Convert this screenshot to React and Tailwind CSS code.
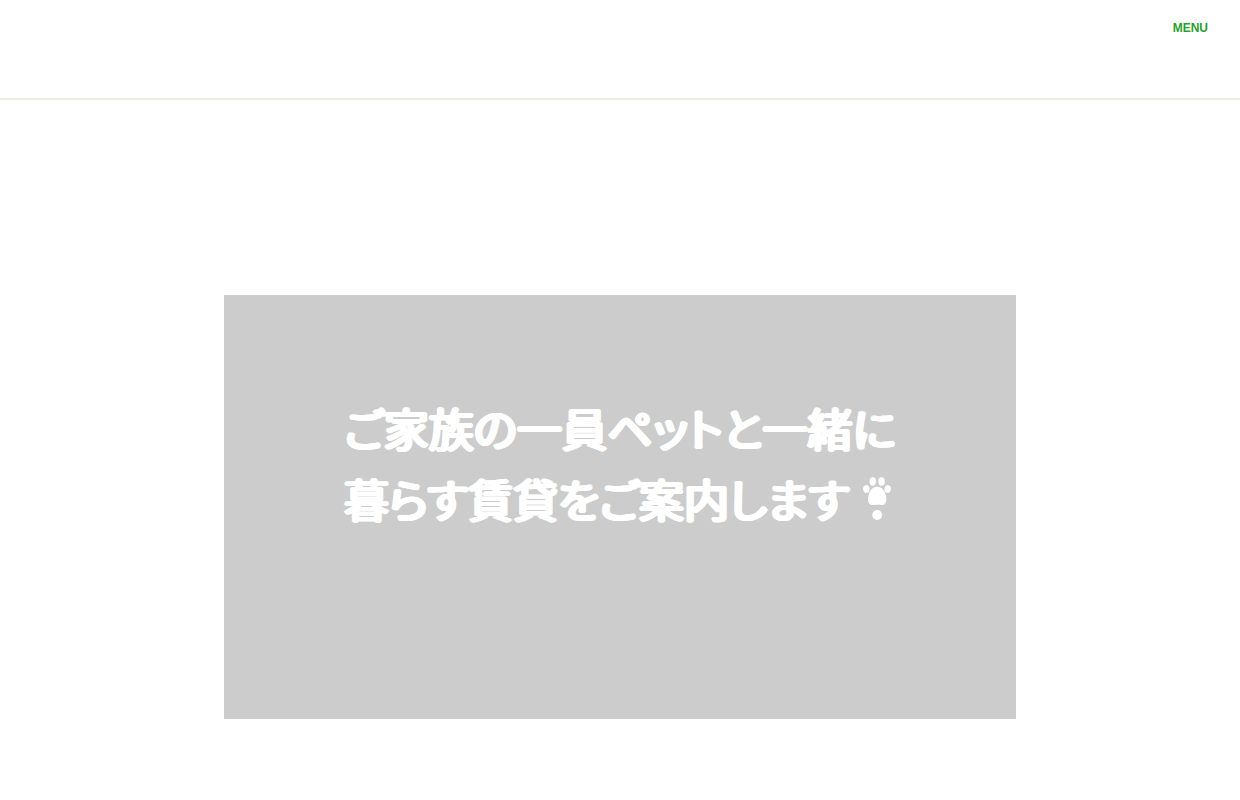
function PawMark() {
  return (
    <svg className="mt-3.5 ml-3.5 h-11 w-7 shrink-0" viewBox="0 0 28 44" fill="currentColor" aria-hidden="true">
      <ellipse cx="3.3" cy="12" rx="3.2" ry="3.9" transform="rotate(-10 3.3 12)" />
      <ellipse cx="9.7" cy="4.5" rx="3.2" ry="4.2" />
      <ellipse cx="18.6" cy="4.5" rx="3.2" ry="4.2" />
      <ellipse cx="24.7" cy="12" rx="3.2" ry="3.9" transform="rotate(10 24.7 12)" />
      <path d="M14.2 9.8c-3.8 0-6.5 2.6-7.9 6.2-1.1 2.8-1.5 6.2-.9 9 .5 2.2 2 3 4.2 2.9 3-.2 6.200-.2 9.200 0 2.200.1 3.700-.7 4.200-2.900.6-2.800.2-6.200-.9-9-1.400-3.600-4.100-6.200-7.900-6.200Z" />
      <circle cx="14.2" cy="38" r="4.9" />
    </svg>
  );
}

export default function App() {
  return (
    <div className="min-h-screen bg-white font-['Liberation_Sans','Noto_Sans_CJK_JP',sans-serif]">
      <header className="flex h-[100px] items-start justify-end border-b-2 border-[#f1ece4] px-8 pt-5">
        <button type="button" className="text-xs leading-4 font-bold text-[#2a9f2e]">
          MENU
        </button>
      </header>
      <main className="px-6 pt-[195px] pb-20">
        <section className="mx-auto min-h-[424px] max-w-[792px] bg-[#ccc] px-6 pt-[97px]">
          <h1
            lang="ja"
            className="mx-auto w-fit font-['Noto_Sans_CJK_JP',sans-serif] text-[45px] leading-[71px] font-normal whitespace-nowrap text-white [font-feature-settings:'palt'] [text-shadow:2px_0_white,-2px_0_white,0_1px_white,0_-1px_white,1px_1px_white,-1px_1px_white,1px_-1px_white,-1px_-1px_white]"
          >
            <span className="block">ご家族の一員ペットと一緒に</span>
            <span className="flex">
              暮らす賃貸をご案内します
              <PawMark />
            </span>
          </h1>
        </section>
      </main>
    </div>
  );
}
